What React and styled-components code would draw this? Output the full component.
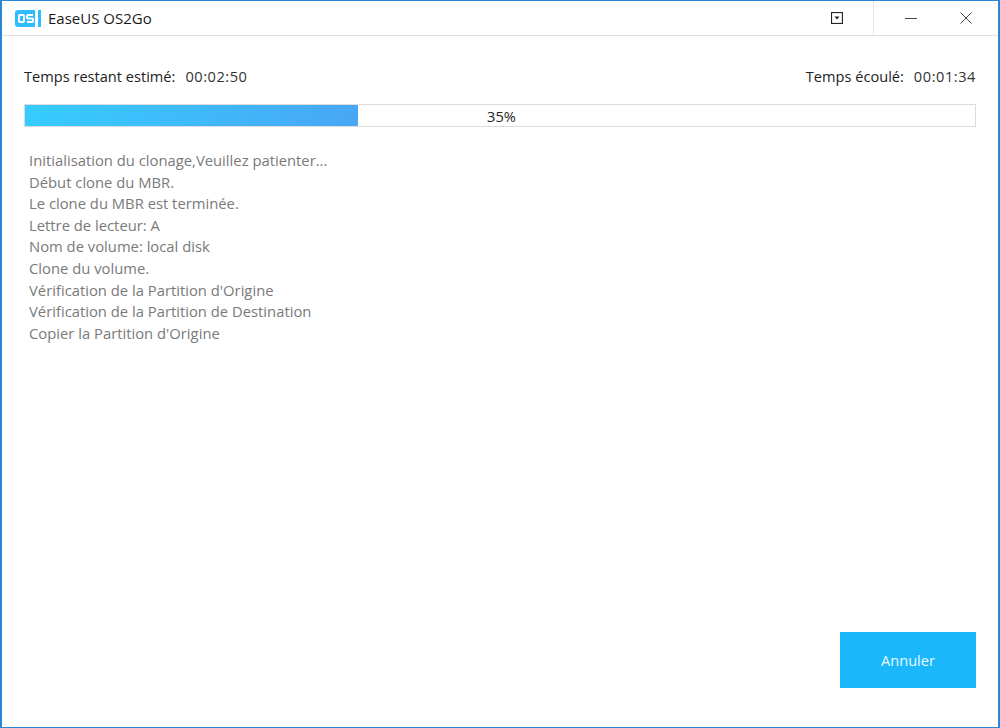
import styled, { createGlobalStyle } from "styled-components";

const Global = createGlobalStyle`
  html, body {
    margin: 0;
    padding: 0;
    background: #fff;
  }
  * {
    box-sizing: border-box;
  }
`;

const Win = styled.div`
  width: 1000px;
  height: 728px;
  display: flex;
  flex-direction: column;
  background: #fff;
  border: 1px solid #2b87d3;
  border-left-width: 2px;
  border-right-width: 2px;
  font-family: "Open Sans", "Noto Sans", sans-serif;
`;

const TitleBar = styled.div`
  height: 35px;
  flex: none;
  display: flex;
  align-items: center;
  padding: 0 15px 0 13px;
  border-bottom: 1px solid #e0e0e0;
`;

const Title = styled.div`
  flex: 1;
  margin-left: 7px;
  font-size: 15px;
  color: #1a1a1a;
`;

const WinBtn = styled.div`
  width: ${(p) => p.w}px;
  height: 34px;
  display: flex;
  align-items: center;
  justify-content: center;
  border-left: ${(p) => (p.sep ? "1px solid #e6e6e6" : "none")};
`;

const Body = styled.div`
  flex: 1;
  display: flex;
  flex-direction: column;
  padding: 30px 22px 39px 22px;
`;

const Times = styled.div`
  display: flex;
  justify-content: space-between;
  font-size: 14.6px;
  line-height: 20px;
  color: #222;
`;

const Time = styled.span`
  display: flex;
  gap: 10px;
`;

const Clock = styled.span`
  letter-spacing: 0.55px;
  color: #333;
`;

const Progress = styled.div`
  position: relative;
  height: 23px;
  margin-top: 18px;
  border: 1px solid #dcdcdc;
  background: #fff;
`;

const Fill = styled.div`
  height: 100%;
  background: linear-gradient(90deg, #36ccfd, #48a7f5);
`;

const Pct = styled.div`
  position: absolute;
  inset: 0;
  padding-left: 3px;
  display: flex;
  align-items: center;
  justify-content: center;
  font-size: 14.6px;
  color: #222;
`;

const Log = styled.div`
  flex: 1;
  padding: 23px 0 0 5px;
  font-size: 14.8px;
  line-height: 21.6px;
  color: #7a7a7a;
`;

const Footer = styled.div`
  display: flex;
  justify-content: flex-end;
`;

const Cancel = styled.button`
  width: 136px;
  height: 56px;
  border: none;
  background: #1ab8fb;
  color: #e8f8ff;
  font-family: inherit;
  font-size: 14.6px;
`;

const lines = [
  "Initialisation du clonage,Veuillez patienter...",
  "Début clone du MBR.",
  "Le clone du MBR est terminée.",
  "Lettre de lecteur: A",
  "Nom de volume: local disk",
  "Clone du volume.",
  "Vérification de la Partition d'Origine",
  "Vérification de la Partition de Destination",
  "Copier la Partition d'Origine",
];

function Logo() {
  return (
    <svg width="26" height="17" viewBox="0 0 26 17">
      <path d="M3 0h17v17H3a3 3 0 0 1-3-3V3a3 3 0 0 1 3-3z" fill="#2fbdfb" />
      <rect x="23" y="0" width="3" height="17" fill="#2fbdfb" />
      <path
        d="M5 5h3a1 1 0 0 1 1 1v5a1 1 0 0 1-1 1H5a1 1 0 0 1-1-1V6a1 1 0 0 1 1-1zM18 5h-5a1 1 0 0 0-1 1v1.5a1 1 0 0 0 1 1h4a1 1 0 0 1 1 1V11a1 1 0 0 1-1 1h-5"
        fill="none"
        stroke="#fff"
        strokeWidth="2"
      />
    </svg>
  );
}

export default function App() {
  return (
    <Win>
      <Global />
      <TitleBar>
        <Logo />
        <Title>EaseUS OS2Go</Title>
        <WinBtn w={72}>
          <svg width="12" height="12" viewBox="0 0 12 12">
            <rect x="0.5" y="0.5" width="11" height="11" fill="none" stroke="#222" strokeWidth="1.2" />
            <path d="M3.5 4.5h5L6 7.5z" fill="#222" />
          </svg>
        </WinBtn>
        <WinBtn w={75} sep>
          <svg width="12" height="12" viewBox="0 0 12 12">
            <path d="M0 6.5h12" stroke="#444" strokeWidth="1" />
          </svg>
        </WinBtn>
        <WinBtn w={35}>
          <svg width="12" height="12" viewBox="0 0 12 12">
            <path d="M0.5 0.5l11 11M11.5 0.5l-11 11" stroke="#444" strokeWidth="1" />
          </svg>
        </WinBtn>
      </TitleBar>
      <Body>
        <Times>
          <Time>
            Temps restant estimé:
            <Clock>00:02:50</Clock>
          </Time>
          <Time>
            Temps écoulé:
            <Clock>00:01:34</Clock>
          </Time>
        </Times>
        <Progress>
          <Fill style={{ width: "35%" }} />
          <Pct>35%</Pct>
        </Progress>
        <Log>
          {lines.map((l) => (
            <div key={l}>{l}</div>
          ))}
        </Log>
        <Footer>
          <Cancel>Annuler</Cancel>
        </Footer>
      </Body>
    </Win>
  );
}
